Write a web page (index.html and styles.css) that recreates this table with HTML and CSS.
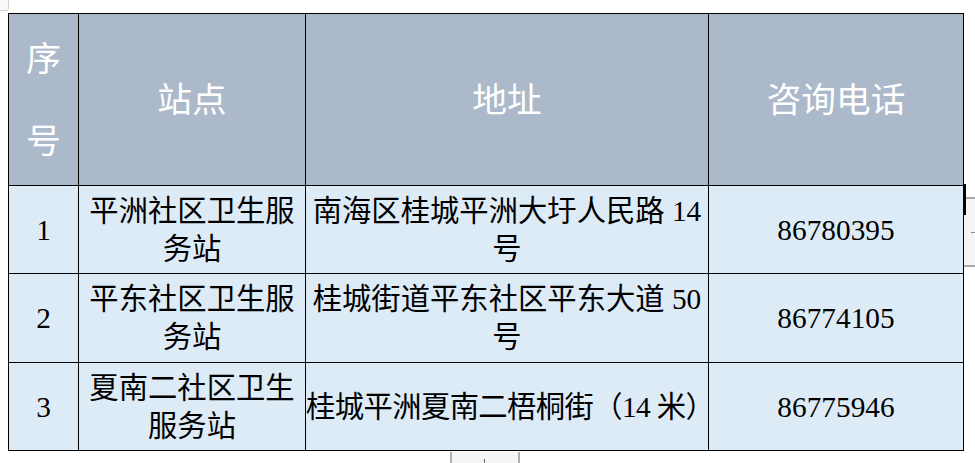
FILE: index.html
```html
<!DOCTYPE html>
<html lang="zh-CN">
<head>
<meta charset="utf-8">
<title>社区卫生服务站</title>
<link rel="stylesheet" href="styles.css">
</head>
<body>
<div class="corner"></div>
<table class="sheet">
  <colgroup>
    <col class="c1"><col class="c2"><col class="c3"><col class="c4">
  </colgroup>
  <thead>
    <tr class="head">
      <th class="seq">序<br>号</th>
      <th>站点</th>
      <th>地址</th>
      <th>咨询电话</th>
    </tr>
  </thead>
  <tbody>
    <tr class="r1">
      <td>1</td>
      <td>平洲社区卫生服<br>务站</td>
      <td>南海区桂城平洲大圩人民路 14<br>号</td>
      <td>86780395</td>
    </tr>
    <tr class="r2">
      <td>2</td>
      <td>平东社区卫生服<br>务站</td>
      <td>桂城街道平东社区平东大道 50<br>号</td>
      <td>86774105</td>
    </tr>
    <tr class="r3">
      <td>3</td>
      <td>夏南二社区卫生<br>服务站</td>
      <td class="tight">桂城平洲夏南二梧桐街（14 米）</td>
      <td>86775946</td>
    </tr>
  </tbody>
</table>
<div class="cursor"></div>
<div class="sidebox"><span class="dash"></span></div>
<div class="bottombox"><span class="tick"></span></div>
</body>
</html>
```
FILE: styles.css
```css
html, body {
  margin: 0;
  background: #ffffff;
}
body {
  padding: 13px 0 0 8px;
  font-family: "Liberation Serif", "Noto Sans CJK SC", serif;
  position: relative;
  height: 450px;
  overflow: hidden;
}
.sheet {
  border-collapse: collapse;
  table-layout: fixed;
  width: 955px;
}
.c1 { width: 70px; }
.c2 { width: 227px; }
.c3 { width: 403px; }
.c4 { width: 255px; }
.sheet th, .sheet td {
  border: 1px solid #000;
  padding: 0;
  text-align: center;
  vertical-align: middle;
}
.head th {
  height: 171px;
  background: #acb9ca;
  color: #ffffff;
  font-weight: normal;
  font-size: 34.67px;
  line-height: 40px;
}
.head th.seq {
  line-height: 82px;
}
.sheet td {
  background: #ddebf7;
  color: #000;
  font-size: 29.33px;
  line-height: 38px;
  white-space: nowrap;
}
.r1 td { height: 87px; }
.r2 td { height: 88px; }
.r3 td { height: 87px; }
.sheet td.tight { letter-spacing: -0.6px; }
.corner {
  position: absolute;
  left: -2px;
  top: -2px;
  width: 9px;
  height: 11px;
  border: 1px solid #d0d0d0;
  border-radius: 0 0 3px 0;
  background: #fafafa;
}
.cursor {
  position: absolute;
  left: 964px;
  top: 184px;
  width: 2px;
  height: 31px;
  background: #000;
  z-index: 2;
}
.sidebox {
  position: absolute;
  left: 964px;
  top: 197px;
  width: 12px;
  height: 66px;
  background: #f5f5f5;
  border-top: 2px solid #a8a8a8;
  border-bottom: 2px solid #a8a8a8;
}
.dash {
  position: absolute;
  left: 7px;
  top: 33px;
  width: 6px;
  height: 1px;
  background: #888;
}
.bottombox {
  position: absolute;
  left: 450px;
  top: 452px;
  width: 66px;
  height: 12px;
  background: #f5f5f5;
  border-left: 2px solid #b0b0b0;
  border-right: 2px solid #b0b0b0;
}
.tick {
  position: absolute;
  left: 32px;
  top: 7px;
  width: 1px;
  height: 5px;
  background: #666;
}
```
